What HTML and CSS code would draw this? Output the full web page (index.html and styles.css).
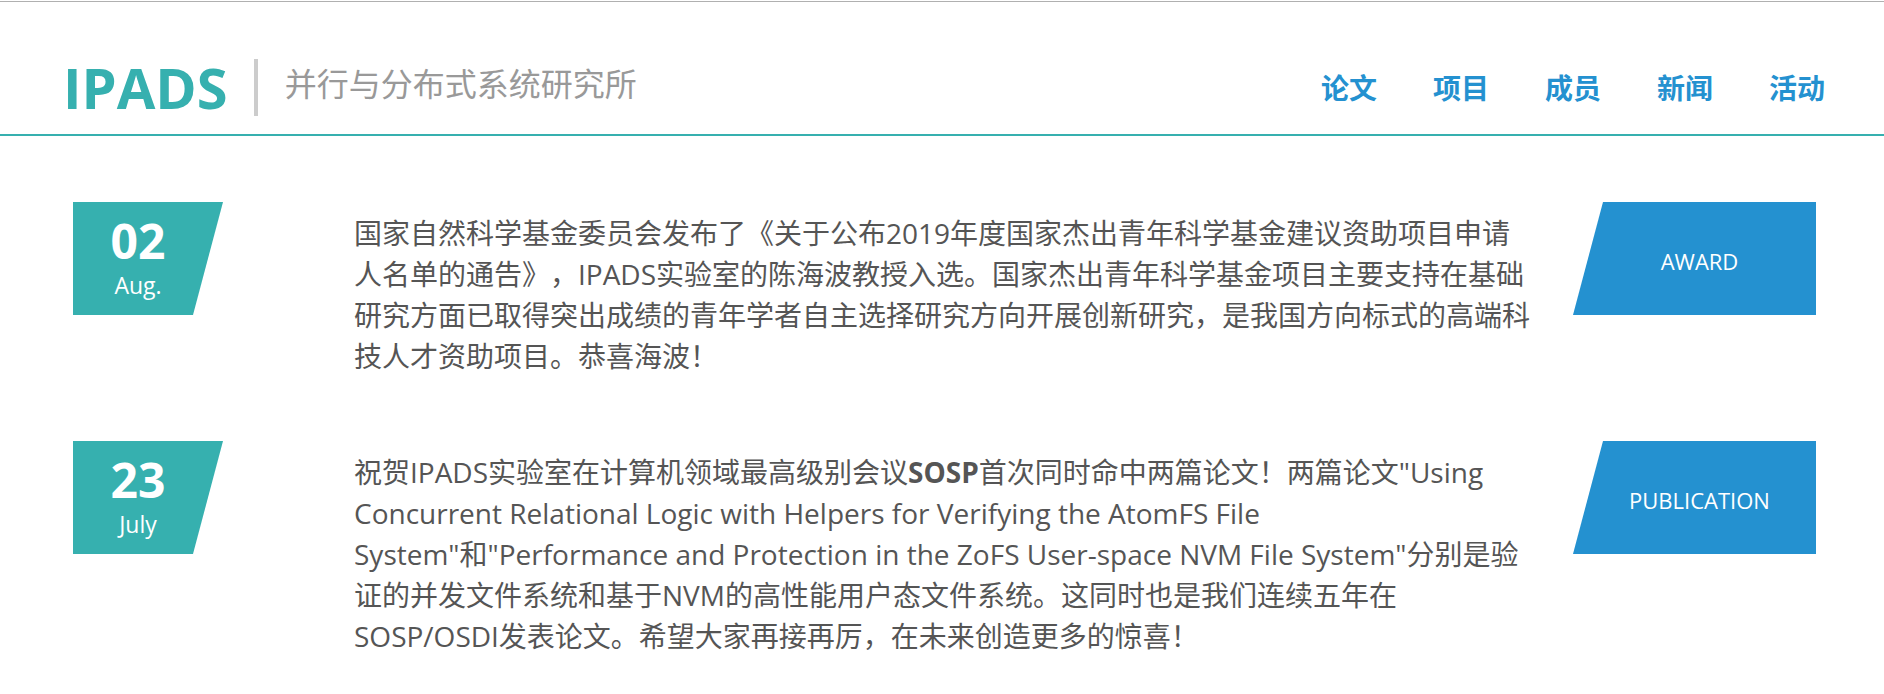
FILE: index.html
```html
<!DOCTYPE html>
<html lang="zh-CN">
<head>
<meta charset="utf-8">
<meta name="viewport" content="width=device-width, initial-scale=1">
<title>IPADS</title>
<link rel="stylesheet" href="styles.css">
</head>
<body>
<header class="header">
  <div class="brand">
    <a class="logo" href="#">IPADS</a>
    <p class="tagline">并行与分布式系统研究所</p>
  </div>
  <nav class="nav">
    <a class="nav-link" href="#">论文</a>
    <a class="nav-link" href="#">项目</a>
    <a class="nav-link" href="#">成员</a>
    <a class="nav-link" href="#">新闻</a>
    <a class="nav-link" href="#">活动</a>
  </nav>
</header>
<main class="news">
  <article class="item">
    <time class="date" datetime="2019-08-02"><span class="day">02</span><span class="month">Aug.</span></time>
    <p class="text">国家自然科学基金委员会发布了《关于公布2019年度国家杰出青年科学基金建议资助项目申请人名单的通告》，IPADS实验室的陈海波教授入选。国家杰出青年科学基金项目主要支持在基础研究方面已取得突出成绩的青年学者自主选择研究方向开展创新研究，是我国方向标式的高端科技人才资助项目。恭喜海波！</p>
    <span class="tag">AWARD</span>
  </article>
  <article class="item">
    <time class="date" datetime="2019-07-23"><span class="day">23</span><span class="month">July</span></time>
    <p class="text">祝贺IPADS实验室在计算机领域最高级别会议<strong>SOSP</strong>首次同时命中两篇论文！两篇论文"Using Concurrent Relational Logic with Helpers for Verifying the AtomFS File System"和"Performance and Protection in the ZoFS User-space NVM File System"分别是验证的并发文件系统和基于NVM的高性能用户态文件系统。这同时也是我们连续五年在SOSP/OSDI发表论文。希望大家再接再厉，在未来创造更多的惊喜！</p>
    <span class="tag">PUBLICATION</span>
  </article>
</main>
</body>
</html>
```
FILE: styles.css
```css
* {
  box-sizing: border-box;
}

body {
  margin: 0;
  padding-top: 1px;
  background: #fff;
  color: #555;
  font-family: "Open Sans", "Noto Sans CJK SC", sans-serif;
  font-size: 28px;
  line-height: 41px;
  text-spacing-trim: space-all;
}

a {
  text-decoration: none;
}

p {
  margin: 0;
}

.header {
  display: flex;
  justify-content: space-between;
  align-items: center;
  padding: 57px 59px 18px 63px;
  border-top: 1px solid #b0b0b0;
  border-bottom: 2px solid #36b0af;
}

.brand {
  display: flex;
  align-items: center;
}

.logo {
  padding-right: 26px;
  color: #36b0af;
  font-size: 56px;
  font-weight: 700;
  line-height: 57px;
}

.tagline {
  height: 57px;
  padding-left: 27px;
  border-left: 4px solid #ccc;
  color: #999;
  font-size: 32px;
  line-height: 50px;
}

.nav {
  display: flex;
  gap: 56px;
  padding-top: 2px;
}

.nav-link {
  color: #2491d0;
  font-weight: 700;
}

.news {
  display: flex;
  flex-direction: column;
  gap: 64px;
  padding: 66px 68px 24px 73px;
}

.item {
  display: grid;
  grid-template-columns: 150px 1fr 243px;
  align-items: start;
}

.date,
.tag {
  display: flex;
  flex-direction: column;
  align-items: center;
  justify-content: center;
  height: 113px;
  color: #fff;
  font-size: 23px;
}

.date {
  padding: 4px 20px 0 0;
  background: #36b0af;
  clip-path: polygon(0 0, 100% 0, calc(100% - 30px) 100%, 0 100%);
}

.day {
  font-size: 48px;
  font-weight: 700;
  line-height: 48px;
}

.month {
  line-height: 40px;
}

.text {
  padding: 11px 35px 0 131px;
}

.tag {
  padding: 6px 0 0 10px;
  background: #2491d0;
  font-size: 22px;
  clip-path: polygon(30px 0, 100% 0, 100% 100%, 0 100%);
}
```
